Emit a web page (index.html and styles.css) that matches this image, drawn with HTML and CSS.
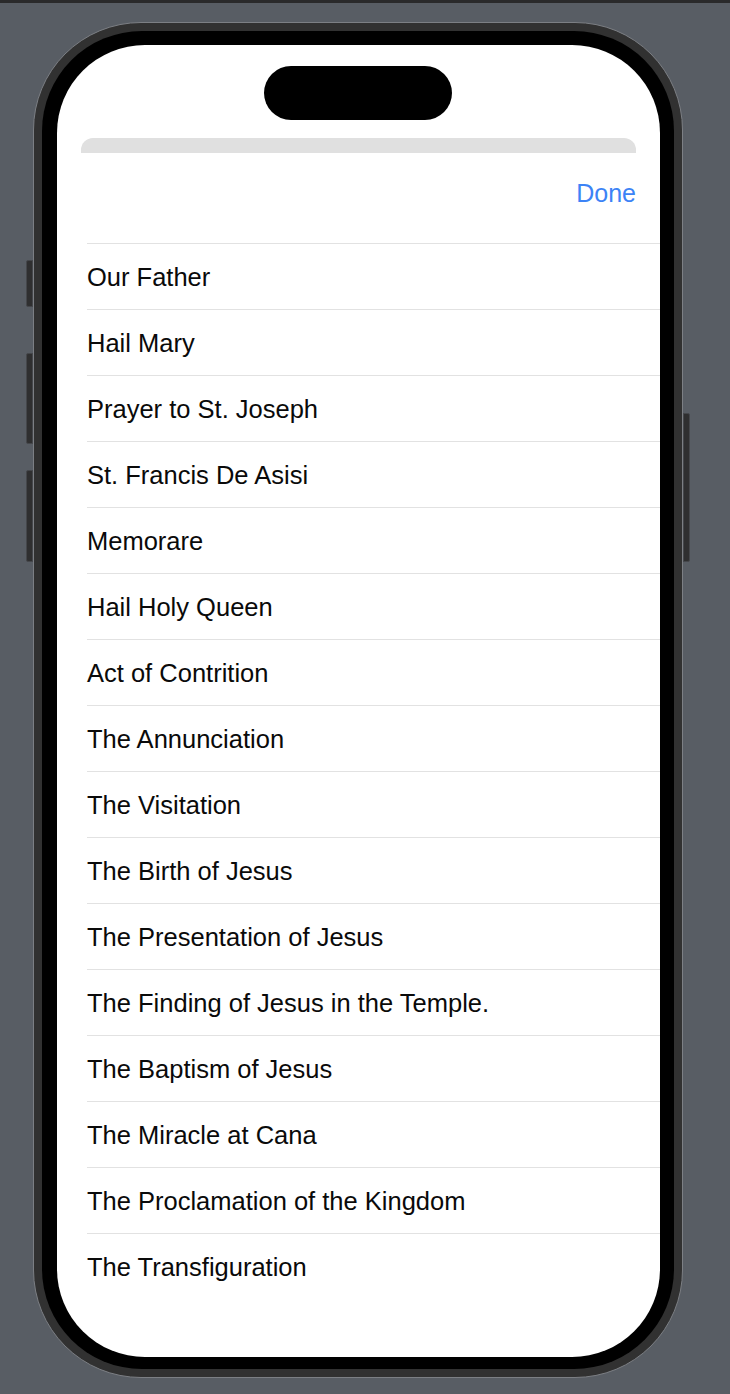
FILE: index.html
```html
<!DOCTYPE html>
<html lang="en">
<head>
<meta charset="utf-8">
<title>Prayers</title>
<link rel="stylesheet" href="styles.css">
</head>
<body>
<div class="topbar"></div>
<div class="stage">
  <div class="phone">
    <span class="btn btn-action"></span>
    <span class="btn btn-vol-up"></span>
    <span class="btn btn-vol-down"></span>
    <span class="btn btn-power"></span>
    <div class="bezel">
      <div class="screen">
        <div class="island"></div>
        <div class="sheet-back"></div>
        <div class="sheet-header">
          <span class="done">Done</span>
        </div>
        <ul class="list">
          <li class="row">Our Father</li>
          <li class="row">Hail Mary</li>
          <li class="row">Prayer to St. Joseph</li>
          <li class="row">St. Francis De Asisi</li>
          <li class="row">Memorare</li>
          <li class="row">Hail Holy Queen</li>
          <li class="row">Act of Contrition</li>
          <li class="row">The Annunciation</li>
          <li class="row">The Visitation</li>
          <li class="row">The Birth of Jesus</li>
          <li class="row">The Presentation of Jesus</li>
          <li class="row">The Finding of Jesus in the Temple.</li>
          <li class="row">The Baptism of Jesus</li>
          <li class="row">The Miracle at Cana</li>
          <li class="row">The Proclamation of the Kingdom</li>
          <li class="row">The Transfiguration</li>
        </ul>
      </div>
    </div>
  </div>
</div>
</body>
</html>
```
FILE: styles.css
```css
html, body {
  margin: 0;
  padding: 0;
}
body {
  width: 730px;
  height: 1394px;
  background: #585d64;
  overflow: hidden;
  font-family: "Liberation Sans", Arial, sans-serif;
}
.topbar {
  height: 3px;
  background: #2a2a2b;
}
.stage {
  padding: 19px 0 0 33px;
}
.phone {
  position: relative;
  box-sizing: border-box;
  width: 650px;
  height: 1356px;
  border: 1px solid #7c7f84;
  border-radius: 108px;
  background: #313131;
  padding: 8px;
}
.btn {
  position: absolute;
  width: 7px;
  background: #2f2f30;
  border: 1px solid #45474b;
  box-sizing: border-box;
}
.btn-action { left: -8px; top: 237px; height: 47px; border-radius: 2px 0 0 2px; }
.btn-vol-up { left: -8px; top: 330px; height: 91px; border-radius: 2px 0 0 2px; }
.btn-vol-down { left: -8px; top: 447px; height: 92px; border-radius: 2px 0 0 2px; }
.btn-power { right: -8px; top: 390px; height: 149px; border-radius: 0 2px 2px 0; }
.bezel {
  box-sizing: border-box;
  height: 100%;
  background: #000;
  border-radius: 100px;
  padding: 14px 14px 12px 15px;
}
.screen {
  position: relative;
  height: 100%;
  background: #fff;
  border-radius: 88px;
  overflow: hidden;
}
.island {
  position: absolute;
  left: 207px;
  top: 21px;
  width: 188px;
  height: 54px;
  border-radius: 27px;
  background: #000;
}
.sheet-back {
  margin: 93px 24px 0 24px;
  height: 15px;
  border-radius: 12px 12px 0 0;
  background: #e0e0e0;
}
.sheet-header {
  height: 90px;
  box-sizing: border-box;
  padding: 25px 24px 0 0;
  display: flex;
  justify-content: flex-end;
  align-items: flex-start;
}
.done {
  font-size: 25px;
  line-height: 30px;
  color: #3c83f6;
}
.list {
  list-style: none;
  margin: 0 0 0 30px;
  padding: 0;
}
.row {
  border-top: 1px solid #e2e2e2;
  height: 64px;
  padding-top: 1px;
  line-height: 65px;
  font-size: 25.5px;
  color: #0a0a0a;
  white-space: nowrap;
}
```
